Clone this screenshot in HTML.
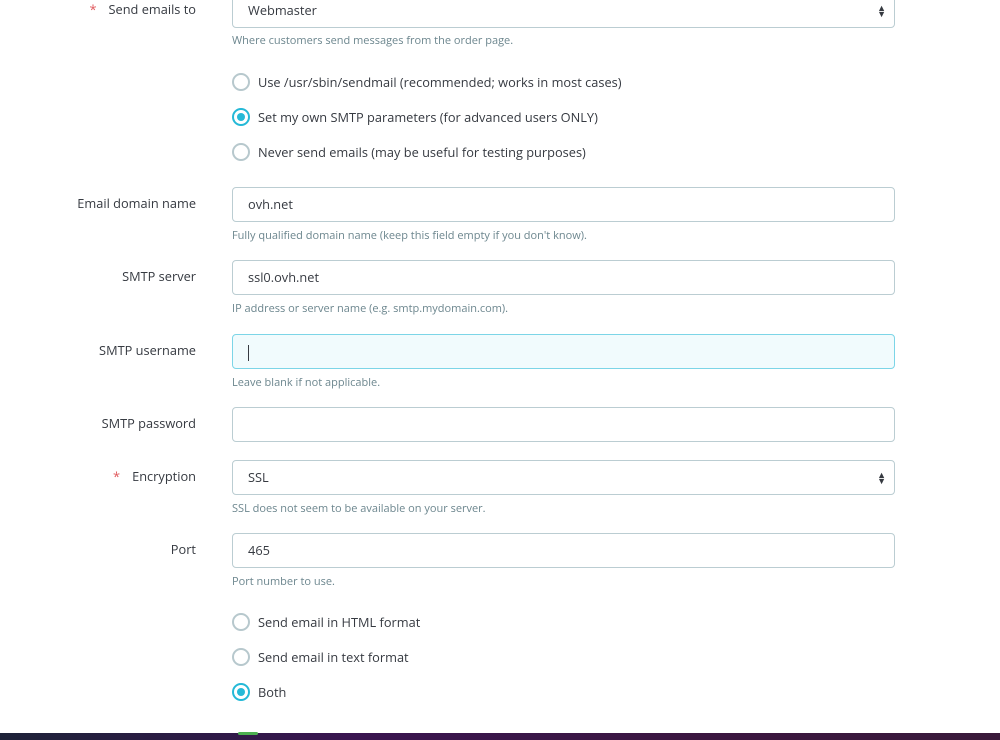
<!DOCTYPE html>
<html><head><style>
body{margin:0;width:1000px;height:740px;background:#fff;position:relative;overflow:hidden;font-family:"Open Sans","Liberation Sans",sans-serif;color:#363a41}
.lbl{position:absolute;right:804px;font-size:12.8px;color:#363a41;text-align:right;white-space:nowrap}
.lbl .req{color:#e0585c;margin-right:12px}
.inp{position:absolute;left:232px;height:33px;border:1px solid #bbcdd2;border-radius:4px;background:#fff;font-size:12.8px;line-height:33px;padding-left:15px;box-sizing:content-box;width:646px}
.inp.focus{background:#f1fbfd;border-color:#7cd5e7}
.help{position:absolute;left:232px;font-size:11px;color:#6c868e}
.arrow{position:absolute;right:8px;top:0;font-size:9px;line-height:6px;padding-top:11px;color:#363a41}
.radio{position:absolute;left:232px;font-size:12.8px;color:#363a41;line-height:18px}
.radio i{display:inline-block;width:14px;height:14px;border:2px solid #b7c8cd;border-radius:50%;vertical-align:top;margin-right:8px;position:relative}
.radio i.on{border-color:#25b9d7}
.radio i.on:after{content:"";position:absolute;left:3px;top:3px;width:8px;height:8px;border-radius:50%;background:#25b9d7}
.bar{position:absolute;left:0;top:733px;width:1000px;height:7px;background:linear-gradient(90deg,#1d2238,#3a1550 35%,#3b1640 70%,#3a1a3a)}
</style></head><body>
<div class="lbl" style="top:0px"><span class="req">*</span>Send emails to</div>
<div class="inp" style="top:-7px">Webmaster<div class="arrow">▲<br>▼</div></div>
<div class="help" style="top:33px">Where customers send messages from the order page.</div>

<div class="radio" style="top:73px"><i></i>Use /usr/sbin/sendmail (recommended; works in most cases)</div>
<div class="radio" style="top:108px"><i class="on"></i>Set my own SMTP parameters (for advanced users ONLY)</div>
<div class="radio" style="top:143px"><i></i>Never send emails (may be useful for testing purposes)</div>

<div class="lbl" style="top:194px">Email domain name</div>
<div class="inp" style="top:187px">ovh.net</div>
<div class="help" style="top:228px">Fully qualified domain name (keep this field empty if you don't know).</div>

<div class="lbl" style="top:267px">SMTP server</div>
<div class="inp" style="top:260px">ssl0.ovh.net</div>
<div class="help" style="top:301px">IP address or server name (e.g. smtp.mydomain.com).</div>

<div class="lbl" style="top:341px">SMTP username</div>
<div class="inp focus" style="top:334px"><span style="display:inline-block;width:1px;height:16px;background:#363a41;vertical-align:middle"></span></div>
<div class="help" style="top:375px">Leave blank if not applicable.</div>

<div class="lbl" style="top:414px">SMTP password</div>
<div class="inp" style="top:407px"></div>

<div class="lbl" style="top:467px"><span class="req">*</span>Encryption</div>
<div class="inp" style="top:460px">SSL<div class="arrow">▲<br>▼</div></div>
<div class="help" style="top:501px">SSL does not seem to be available on your server.</div>

<div class="lbl" style="top:540px">Port</div>
<div class="inp" style="top:533px">465</div>
<div class="help" style="top:574px">Port number to use.</div>

<div class="radio" style="top:613px"><i></i>Send email in HTML format</div>
<div class="radio" style="top:648px"><i></i>Send email in text format</div>
<div class="radio" style="top:683px"><i class="on"></i>Both</div>

<div class="bar"></div>
<div style="position:absolute;left:238px;top:732px;width:20px;height:3px;background:#4caf50;border-radius:2px"></div>
</body></html>
